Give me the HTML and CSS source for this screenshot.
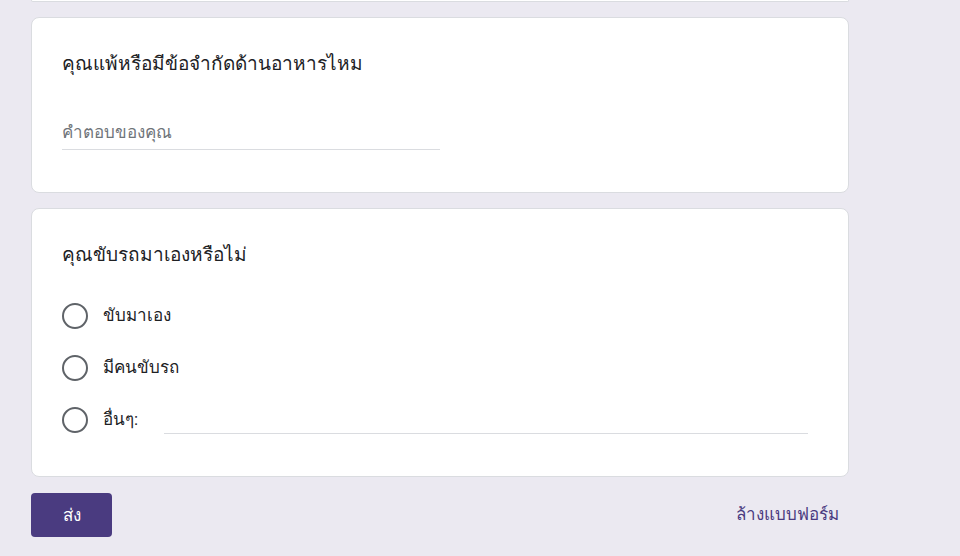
FILE: index.html
```html
<!DOCTYPE html>
<html lang="th">
<head>
<meta charset="utf-8">
<link rel="stylesheet" href="styles.css">
</head>
<body>
<div class="page">
  <div class="card card-prev"></div>
  <div class="card">
    <div class="q-title">คุณแพ้หรือมีข้อจำกัดด้านอาหารไหม</div>
    <div class="text-input"><span class="placeholder">คำตอบของคุณ</span></div>
  </div>
  <div class="card card-radio">
    <div class="q-title">คุณขับรถมาเองหรือไม่</div>
    <div class="options">
      <div class="option"><span class="radio"></span><span class="opt-label">ขับมาเอง</span></div>
      <div class="option"><span class="radio"></span><span class="opt-label">มีคนขับรถ</span></div>
      <div class="option"><span class="radio"></span><span class="opt-label">อื่นๆ:</span><span class="other-input"></span></div>
    </div>
  </div>
  <div class="actions">
    <button class="submit">ส่ง</button>
    <span class="clear">ล้างแบบฟอร์ม</span>
  </div>
</div>
</body>
</html>
```

FILE: styles.css
```css
html, body {
  margin: 0;
  padding: 0;
  background: #ebe9f1;
  font-family: Roboto, "Noto Sans", "DejaVu Sans", sans-serif;
  color: #202124;
}
.page {
  width: 818px;
  margin-left: 31px;
  display: flex;
  flex-direction: column;
  gap: 15px;
}
.card {
  background: #fff;
  border: 1px solid #dadce0;
  border-radius: 8px;
  padding: 34px 29px 42px 30px;
}
.card-prev {
  height: 1px;
  padding: 0;
  border-top: none;
  border-radius: 0 0 8px 8px;
}
.q-title {
  font-size: 19px;
  line-height: 24px;
  color: #202124;
}
.text-input {
  margin-top: 41px;
  width: 378px;
  height: 32px;
  border-bottom: 1px solid #dadce0;
  display: flex;
  align-items: center;
}
.placeholder {
  font-size: 17px;
  color: #70757a;
  padding-bottom: 3px;
}
.card-radio {
  padding-bottom: 30px;
}
.options {
  margin-top: 23px;
  display: flex;
  flex-direction: column;
}
.option {
  height: 52px;
  display: flex;
  align-items: center;
}
.radio {
  width: 22px;
  height: 22px;
  border: 2px solid #5f6368;
  border-radius: 50%;
  flex: none;
}
.opt-label {
  margin-left: 15px;
  font-size: 17px;
  color: #202124;
  padding-bottom: 3px;
}
.other-input {
  flex: 1;
  align-self: flex-start;
  height: 39px;
  border-bottom: 1px solid #dadce0;
  margin-left: 26px;
  margin-right: 11px;
}
.actions {
  margin-top: 1px;
  display: flex;
  justify-content: space-between;
  align-items: center;
}
.submit {
  width: 81px;
  height: 44px;
  background: #4a3b80;
  color: #fff;
  border: none;
  border-radius: 4px;
  font-family: inherit;
  font-size: 17px;
  font-weight: 500;
  padding-bottom: 3px;
}
.clear {
  color: #4a3b80;
  font-size: 17px;
  font-weight: 500;
  margin-right: 10px;
  padding-bottom: 3px;
}
```
